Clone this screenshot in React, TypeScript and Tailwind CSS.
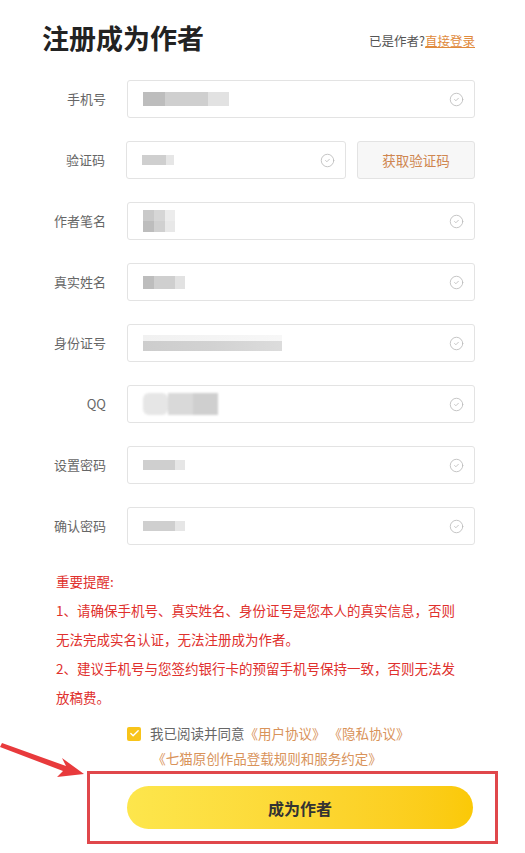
import { CircleCheck, Check } from "lucide-react"

const font = { fontFamily: '"Noto Sans CJK SC", "Noto Sans", sans-serif' }

type Blur = { w: number; h: number; kind: "bar" | "stack" | "long" | "qq" | "short" }

const fields: { label: string; blur: Blur }[] = [
  { label: "手机号", blur: { w: 86, h: 14, kind: "bar" } },
  { label: "验证码", blur: { w: 32, h: 10, kind: "short" } },
  { label: "作者笔名", blur: { w: 32, h: 22, kind: "stack" } },
  { label: "真实姓名", blur: { w: 42, h: 13, kind: "bar" } },
  { label: "身份证号", blur: { w: 139, h: 12, kind: "long" } },
  { label: "QQ", blur: { w: 75, h: 22, kind: "qq" } },
  { label: "设置密码", blur: { w: 42, h: 10, kind: "short" } },
  { label: "确认密码", blur: { w: 42, h: 10, kind: "short" } },
]

function Placeholder({ blur }: { blur: Blur }) {
  if (blur.kind === "stack") {
    return (
      <div className="flex flex-col blur-[0.6px]">
        <div className="flex">
          <div className="h-[11px] w-[11px] bg-[#c9c9c9]" />
          <div className="h-[11px] w-[11px] bg-[#d6d6d6]" />
          <div className="h-[11px] w-[10px] bg-[#ececec]" />
        </div>
        <div className="flex">
          <div className="h-[11px] w-[11px] bg-[#bdbdbd]" />
          <div className="h-[11px] w-[11px] bg-[#d0d0d0]" />
          <div className="h-[11px] w-[10px] bg-[#e8e8e8]" />
        </div>
      </div>
    )
  }
  if (blur.kind === "long") {
    return (
      <div className="flex flex-col blur-[0.6px]">
        <div className="h-[6px] w-[139px] bg-gradient-to-r from-[#f1f1f1] to-[#f7f7f7]" />
        <div className="h-[10px] w-[139px] bg-gradient-to-r from-[#cdcdcd] via-[#d2d2d2] to-[#dcdcdc]" />
      </div>
    )
  }
  if (blur.kind === "qq") {
    return (
      <div className="flex blur-[0.8px]">
        <div className="h-[22px] w-[25px] rounded-[6px] bg-[#e6e6e6]" />
        <div className="h-[22px] w-[25px] bg-[#d9d9d9]" />
        <div className="h-[22px] w-[25px] bg-[#cfcfcf]" />
      </div>
    )
  }
  if (blur.kind === "short") {
    return (
      <div className="flex blur-[0.5px]">
        <div className="h-[10px] bg-[#cfcfcf]" style={{ width: blur.w * 0.75 }} />
        <div className="h-[10px] bg-[#e6e6e6]" style={{ width: blur.w * 0.25 }} />
      </div>
    )
  }
  return (
    <div className="flex blur-[0.5px]">
      <div className="bg-[#bdbdbd]" style={{ width: blur.w * 0.25, height: blur.h }} />
      <div className="bg-[#cfcfcf]" style={{ width: blur.w * 0.5, height: blur.h }} />
      <div className="bg-[#e2e2e2]" style={{ width: blur.w * 0.25, height: blur.h }} />
    </div>
  )
}

function InputBox({ blur, className }: { blur: Blur; className: string }) {
  return (
    <div
      className={`flex h-[38px] items-center justify-between rounded-[3px] border border-[#e3e3e3] bg-white pl-[15px] pr-[10px] ${className}`}
    >
      <Placeholder blur={blur} />
      <CircleCheck size={15} strokeWidth={1.4} className="text-[#bdbdbd]" />
    </div>
  )
}

export default function App() {
  return (
    <div className="relative h-[853px] w-[525px] overflow-hidden bg-white" style={font}>
      <div className="pl-[42px] pr-[50px] pt-[19px]">
        <div className="flex h-[38px] items-center justify-between">
          <h1 className="text-[27px] font-bold leading-[38px] text-[#222]">注册成为作者</h1>
          <div className="mt-[6px] text-[12.5px] text-[#555]">
            已是作者?<span className="text-[#e08a3c] underline">直接登录</span>
          </div>
        </div>

        <div className="mt-[23px] flex flex-col gap-[23px]">
          {fields.map((f, i) => (
            <div key={f.label} className="flex items-center">
              <div className="w-[64px] text-right text-[13px] text-[#666]">{f.label}</div>
              {i === 1 ? (
                <div className="ml-[21px] flex gap-[11px]">
                  <InputBox blur={f.blur} className="w-[220px]" />
                  <button className="h-[38px] w-[118px] rounded-[3px] border border-[#e3e3e3] bg-[#f7f7f7] text-[13.5px] text-[#cf8650]">
                    获取验证码
                  </button>
                </div>
              ) : (
                <InputBox blur={f.blur} className="ml-[21px] w-[348px]" />
              )}
            </div>
          ))}
        </div>

        <div className="ml-[14px] mt-[22px] w-[410px] text-[13.5px] leading-[29px] text-[#e0302d]">
          <p>重要提醒:</p>
          <p>1、请确保手机号、真实姓名、身份证号是您本人的真实信息，否则无法完成实名认证，无法注册成为作者。</p>
          <p>2、建议手机号与您签约银行卡的预留手机号保持一致，否则无法发放稿费。</p>
        </div>

        <div className="ml-[85px] mt-[9px] w-[280px] text-center text-[13.5px] leading-[25px]">
          <div className="flex items-center whitespace-nowrap">
            <span className="flex h-[14px] w-[14px] shrink-0 items-center justify-center rounded-[2px] bg-[#f8c41a]">
              <Check size={11} strokeWidth={3} className="text-white" />
            </span>
            <span className="ml-[9px] text-[#666]">我已阅读并同意</span>
            <span className="text-[#d9935a]">《用户协议》 《隐私协议》</span>
          </div>
          <div className="text-[#d9935a]">《七猫原创作品登载规则和服务约定》</div>
        </div>
      </div>

      <div className="ml-[87px] flex h-[73px] w-[411px] items-center border-[3px] border-[#e0474b] pl-[37px]">
        <button className="h-[43px] w-[346px] rounded-full bg-gradient-to-r from-[#fde64c] to-[#fbc906] text-[16px] font-bold text-[#333]">
          成为作者
        </button>
      </div>

      <svg className="absolute left-0 top-[733px]" width="90" height="50" viewBox="0 0 90 50">
        <path d="M2 10 L66 33 L62 25 L84 41 L57 44 L63 38 L0 14 Z" fill="#e83a3c" />
      </svg>
    </div>
  )
}
